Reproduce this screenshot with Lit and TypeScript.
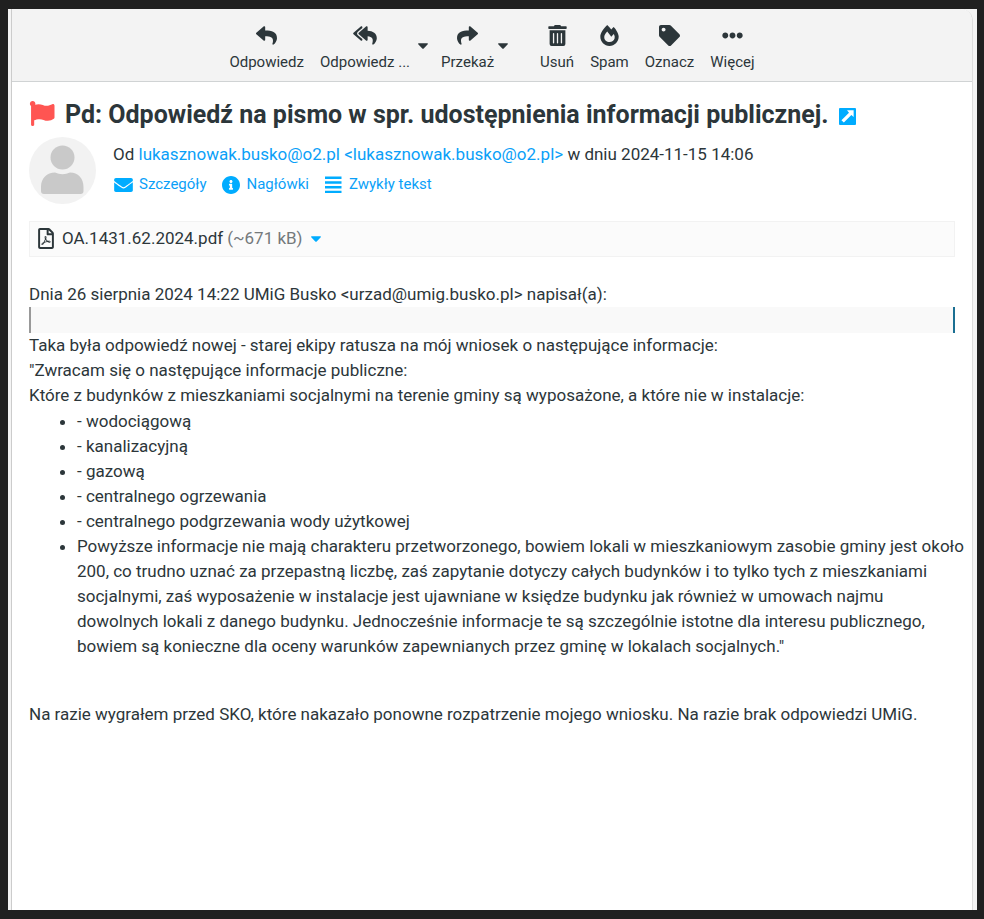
import { LitElement, html, css, svg } from "lit";
import { customElement, property } from "lit/decorators.js";

interface Glyph {
  box: string;
  d: string;
}

const REPLY =
  "M8.309 189.836L184.313 37.851C199.719 24.546 224 35.347 224 56.015v80.053c160.629 1.839 288 34.032 288 186.258 0 61.441-39.581 122.309-83.333 154.132-13.653 9.931-33.111-2.533-28.077-18.631 45.344-145.012-21.507-183.51-176.59-185.742V360c0 20.7-24.3 31.453-39.687 18.164l-176.004-152c-11.071-9.562-11.086-26.753 0-36.328z";

const glyphs: Record<string, Glyph> = {
  reply: { box: "0 0 512 512", d: REPLY },
  forward: { box: "0 0 512 512", d: REPLY },
  replyAll: {
    box: "0 0 576 512",
    d: "M136.309 189.836L312.313 37.851C327.72 24.546 352 35.348 352 56.015v82.763c129.182 10.231 224 52.212 224 183.548 0 61.441-39.582 122.309-83.333 154.132-13.653 9.931-33.111-2.533-28.077-18.631 38.512-123.162-3.922-169.482-112.59-182.015v84.175c0 20.701-24.3 31.453-39.687 18.164L136.309 226.164c-11.071-9.561-11.086-26.753 0-36.328zM8.309 226.164L184.313 378.15C199.7 391.439 224 380.687 224 359.986v-15.818l-108.606-93.785c-26.7-23-26.7-61.7 0-84.765L224 71.8V56.015c0-20.668-24.28-31.469-39.687-18.164L8.309 189.836c-11.086 9.575-11.071 26.767 0 36.328z",
  },
  trash: {
    box: "0 0 448 512",
    d: "M32 464a48 48 0 0 0 48 48h288a48 48 0 0 0 48-48V128H32zm272-256a16 16 0 0 1 32 0v224a16 16 0 0 1-32 0zm-96 0a16 16 0 0 1 32 0v224a16 16 0 0 1-32 0zm-96 0a16 16 0 0 1 32 0v224a16 16 0 0 1-32 0zM432 32H312l-9.4-18.7A24 24 0 0 0 281.1 0H166.8a23.72 23.72 0 0 0-21.4 13.3L136 32H16A16 16 0 0 0 0 48v32a16 16 0 0 0 16 16h416a16 16 0 0 0 16-16V48a16 16 0 0 0-16-16z",
  },
  spam: {
    box: "0 0 448 512",
    d: "M323.56 51.2c-20.8 19.3-39.58 39.59-56.22 59.97C240.08 73.62 206.28 35.53 168 0 69.74 91.17 0 209.96 0 281.6 0 408.85 100.29 512 224 512s224-103.15 224-230.4c0-53.27-51.98-163.14-124.44-230.4zm-19.47 340.65C282.43 407.01 255.72 416 226.86 416 154.71 416 96 368.26 96 290.75c0-38.61 24.31-72.63 72.79-130.75 6.93 7.98 98.83 125.34 98.83 125.34l58.63-66.88c4.14 6.85 7.91 13.55 11.27 19.97 27.35 52.19 15.81 118.97-33.43 153.42z",
  },
  tag: {
    box: "0 0 512 512",
    d: "M0 252.118V48C0 21.49 21.49 0 48 0h204.118a48 48 0 0 1 33.941 14.059l211.882 211.882c18.745 18.745 18.745 49.137 0 67.882L293.823 497.941c-18.745 18.745-49.137 18.745-67.882 0L14.059 286.059A48 48 0 0 1 0 252.118zM112 64c-26.51 0-48 21.49-48 48s21.49 48 48 48 48-21.49 48-48-21.49-48-48-48z",
  },
  more: {
    box: "0 0 512 512",
    d: "M328 256c0 39.8-32.2 72-72 72s-72-32.2-72-72 32.2-72 72-72 72 32.2 72 72zm104-72c-39.8 0-72 32.2-72 72s32.2 72 72 72 72-32.2 72-72-32.2-72-72-72zm-352 0c-39.8 0-72 32.2-72 72s32.2 72 72 72 72-32.2 72-72-32.2-72-72-72z",
  },
  caret: {
    box: "10 190 300 172",
    d: "M31.3 192h257.3c17.8 0 26.7 21.5 14.1 34.1L174.1 354.8c-7.8 7.8-20.5 7.8-28.3 0L17.2 226.1C4.6 213.5 13.5 192 31.3 192z",
  },
  flag: {
    box: "0 0 512 512",
    d: "M349.565 98.783C295.978 98.783 251.721 64 184.348 64c-24.955 0-47.309 4.384-68.045 12.013a55.947 55.947 0 0 0 3.586-23.562C118.117 24.015 94.806 1.206 66.338.048 34.345-1.254 8 24.296 8 56c0 19.026 9.497 35.825 24 45.945V488c0 13.255 10.745 24 24 24h16c13.255 0 24-10.745 24-24v-94.4c28.311-12.064 63.582-22.122 114.435-22.122 53.588 0 97.844 34.783 165.217 34.783 48.169 0 86.667-16.294 122.505-40.858C506.84 359.452 512 349.571 512 339.045v-243.1c0-23.393-24.269-38.87-45.485-29.016-34.338 15.948-76.454 31.854-116.95 31.854z",
  },
  open: {
    box: "0 0 18 18",
    d: "M1 0h16a1 1 0 0 1 1 1v16a1 1 0 0 1-1 1H1a1 1 0 0 1-1-1V1a1 1 0 0 1 1-1zM8.500 2.500L10.600 4.900 2.600 12.900 5.100 15.400 13.100 7.400 15.500 9.500V2.500z",
  },
  envelope: {
    box: "0 64 512 384",
    d: "M502.3 190.8c3.9-3.1 9.7-.2 9.7 4.7V400c0 26.5-21.5 48-48 48H48c-26.5 0-48-21.5-48-48V195.6c0-5 5.7-7.8 9.7-4.7 22.4 17.4 52.1 39.5 154.1 113.6 21.1 15.4 56.7 47.8 92.2 47.6 35.7.3 72-32.8 92.3-47.6 102-74.1 131.6-96.3 154-113.7zM256 320c23.2.4 56.6-29.2 73.4-41.4 132.7-96.3 142.8-104.7 173.4-128.7 5.8-4.5 9.2-11.5 9.2-18.9v-19c0-26.5-21.5-48-48-48H48c-26.5 0-48 21.5-48 48v19c0 7.4 3.4 14.3 9.2 18.9 30.6 23.9 40.7 32.4 173.4 128.7 16.8 12.2 50.2 41.8 73.4 41.4z",
  },
  info: {
    box: "8 8 496 496",
    d: "M256 8C119.043 8 8 119.083 8 256c0 136.997 111.043 248 248 248s248-111.003 248-248C504 119.083 392.957 8 256 8zm0 110c23.196 0 42 18.804 42 42s-18.804 42-42 42-42-18.804-42-42 18.804-42 42-42zm56 254c0 6.627-5.373 12-12 12h-88c-6.627 0-12-5.373-12-12v-24c0-6.627 5.373-12 12-12h12v-64h-12c-6.627 0-12-5.373-12-12v-24c0-6.627 5.373-12 12-12h64c6.627 0 12 5.373 12 12v100h12c6.627 0 12 5.373 12 12v24z",
  },
  lines: {
    box: "0 0 18 18",
    d: "M1 .6h16.500v2.400H1zM1 5.300h16.500v2.400H1zM1 10h16.500v2.400H1zM1 14.700h16.500v2.400H1z",
  },
  pdf: {
    box: "0 0 384 512",
    d: "M369.9 97.9L286 14C277 5 264.8-.1 252.1-.1H48C21.5 0 0 21.5 0 48v416c0 26.5 21.5 48 48 48h288c26.5 0 48-21.5 48-48V131.9c0-12.7-5.1-25-14.1-34zM332.1 128H256V51.9l76.1 76.1zM48 464V48h160v104c0 13.3 10.7 24 24 24h104v288H48zm250.2-143.7c-12.2-12-47-8.7-64.4-6.5-17.2-10.5-28.7-25-36.8-46.3 3.9-16.1 10.1-40.6 5.4-56-4.2-26.2-37.8-23.6-42.6-5.9-4.4 16.1-.4 38.5 7 67.1-10 23.9-24.9 56-35.4 74.4-20 10.3-47 26.2-51 46.2-3.3 15.8 26 55.2 76.1-31.2 22.4-7.4 46.8-16.5 68.4-20.1 18.9 10.2 41 17 55.8 17 25.5 0 28-28.2 17.5-38.7zm-198.1 77.8c5.1-13.7 24.5-29.5 30.4-35-19 30.3-30.4 35.7-30.4 35zm81.6-190.6c7.4 0 6.7 32.1 1.8 40.8-4.4-13.9-4.3-40.8-1.8-40.8zm-24.4 136.6c9.7-16.9 18-37 24.7-54.7 8.3 15.1 18.9 27.2 30.1 35.5-20.8 4.3-38.9 13.1-54.8 19.2zm131.6-5s-5 6-37.3-7.8c35.1-2.6 40.9 5.4 37.3 7.8z",
  },
};

@customElement("mail-icon")
export class MailIcon extends LitElement {
  @property() name = "reply";

  static styles = css`
    :host {
      display: block;
      flex: none;
    }
    svg {
      display: block;
      width: 100%;
      height: 100%;
      fill: currentColor;
    }
  `;

  render() {
    const g = glyphs[this.name];
    const flip = this.name === "forward" ? "matrix(-1 0 0 1 512 0)" : "";
    return html`<svg viewBox=${g.box} aria-hidden="true">
      ${svg`<path fill-rule="evenodd" transform=${flip} d=${g.d}></path>`}
    </svg>`;
  }
}

@customElement("app-root")
export class AppRoot extends LitElement {
  static styles = css`
    :host {
      box-sizing: border-box;
      min-height: 100vh;
      padding: 9px 7px 9px 8px;
      background: #202020;
      color: #2c363a;
      font: 17px/25px Roboto, sans-serif;
      display: flex;
    }
    .window {
      flex: 1;
      min-width: 0;
      display: flex;
      padding: 0 4px 0 3px;
      background: #f4f4f4;
    }
    .panel {
      flex: 1;
      min-width: 0;
      background: #fff;
      border: 1px solid #ddd;
      border-width: 0 1px;
      border-left-color: #ccc;
      border-top-right-radius: 12px;
    }
    .toolbar {
      display: flex;
      justify-content: center;
      align-items: stretch;
      height: 72px;
      background: #f3f3f3;
      border-bottom: 1px solid #d0d3d4;
      border-top-right-radius: 12px;
    }
    button {
      border: 0;
      padding: 0;
      background: none;
      color: inherit;
      font: inherit;
    }
    .tool {
      display: flex;
      flex-direction: column;
      align-items: center;
      gap: 6px;
      padding: 16px 8px 0;
      font-size: 15px;
      line-height: 20px;
      white-space: nowrap;
    }
    .tight {
      padding-right: 4px;
    }
    .glyph {
      width: 21px;
      height: 21px;
    }
    .wide {
      width: 24px;
    }
    .drop {
      display: flex;
      align-items: center;
      padding: 2px 5px 0 0;
    }
    .last {
      padding-right: 24px;
    }
    .caret {
      width: 10px;
      height: 6px;
    }
    .message {
      padding: 16px 17px;
    }
    h1 {
      display: flex;
      align-items: center;
      gap: 10px;
      margin: 0;
      font-size: 25px;
      line-height: 34px;
      font-weight: 700;
    }
    .flag {
      width: 26px;
      height: 25px;
      margin-bottom: 3px;
      color: #ff5552;
    }
    a {
      color: #0b9ff8;
      text-decoration: none;
    }
    .open {
      width: 17px;
      height: 17px;
      margin-top: 3px;
      color: #00acff;
    }
    .sender {
      display: flex;
      gap: 17px;
      margin-top: 5px;
    }
    .avatar {
      flex: none;
      width: 67px;
      height: 67px;
    }
    .avatar svg {
      display: block;
    }
    .from {
      margin: 5px 0 6px;
    }
    .links {
      display: flex;
      gap: 15px;
      font-size: 15px;
      line-height: 22px;
    }
    .links a {
      display: flex;
      align-items: center;
      gap: 7px;
    }
    .links mail-icon {
      color: #00acff;
      width: 18px;
      height: 18px;
      margin-top: 2px;
    }
    .links .mail {
      width: 19px;
      height: 14px;
      margin-left: 1px;
      margin-right: -1px;
    }
    .attachment {
      display: flex;
      align-items: center;
      margin-top: 17px;
      padding: 0 8px;
      height: 34px;
      background: #fbfbfb;
      border: 1px solid #f2f2f2;
    }
    .attachment a {
      display: flex;
      align-items: center;
      color: inherit;
      line-height: 24px;
      padding-bottom: 2px;
    }
    .pdf {
      width: 16px;
      height: 21px;
      margin-right: 8px;
    }
    .size {
      margin: 0 8px 0 4px;
      color: #74797b;
    }
    .blue {
      color: #00acff;
    }
    .body {
      margin-top: 25px;
    }
    p {
      margin: 0;
    }
    blockquote {
      height: 26px;
      margin: 0;
      background: #f9f9f9;
      border-left: 2px solid #999;
      border-right: 2px solid #1a6f92;
    }
    ul {
      margin: 1px -12px 43px 0;
      padding-left: 48px;
    }
  `;

  private tool(icon: string, label: string, extra = "") {
    return html`<button class="tool ${extra}">
      <mail-icon class="glyph ${icon === "replyAll" ? "wide" : ""}" name=${icon}></mail-icon>
      <span>${label}</span>
    </button>`;
  }

  private drop(label: string, extra = "") {
    return html`<button class="drop ${extra}" aria-label=${label}>
      <mail-icon class="caret" name="caret"></mail-icon>
    </button>`;
  }

  render() {
    return html`
      <div class="window">
        <main class="panel">
          <nav class="toolbar">
            ${this.tool("reply", "Odpowiedz")} ${this.tool("replyAll", "Odpowiedz ...")}
            ${this.drop("Opcje odpowiedzi")} ${this.tool("forward", "Przekaż", "tight")}
            ${this.drop("Opcje przekazania", "last")} ${this.tool("trash", "Usuń")}
            ${this.tool("spam", "Spam")} ${this.tool("tag", "Oznacz")}
            ${this.tool("more", "Więcej")}
          </nav>
          <article class="message">
            <h1>
              <mail-icon class="flag" name="flag"></mail-icon>
              <span>Pd: Odpowiedź na pismo w spr. udostępnienia informacji publicznej.</span>
              <a href="#" aria-label="Otwórz w nowym oknie"><mail-icon class="open" name="open"></mail-icon></a>
            </h1>
            <div class="sender">
              <div class="avatar">
                <svg viewBox="0 0 67 67" aria-hidden="true">
                  <circle cx="33.500" cy="33.500" r="33.500" fill="#f2f2f2"></circle>
                  <circle cx="33.500" cy="20.500" r="12" fill="#c9c9c9"></circle>
                  <path
                    d="M12 54V50C12 41 18 35.500 26 35.500Q33.500 39 41 35.500C49 35.500 54.500 41 54.500 50V54Q54.500 57 51.500 57H15Q12 57 12 54Z"
                    fill="#c9c9c9"
                  ></path>
                </svg>
              </div>
              <div>
                <p class="from">
                  Od <a href="#">lukasznowak.busko@o2.pl &lt;lukasznowak.busko@o2.pl&gt;</a> w dniu
                  2024-11-15 14:06
                </p>
                <div class="links">
                  <a href="#"><mail-icon class="mail" name="envelope"></mail-icon>Szczegóły</a>
                  <a href="#"><mail-icon name="info"></mail-icon>Nagłówki</a>
                  <a href="#"><mail-icon name="lines"></mail-icon>Zwykły tekst</a>
                </div>
              </div>
            </div>
            <div class="attachment">
              <a href="#">
                <mail-icon class="pdf" name="pdf"></mail-icon>
                <span>OA.1431.62.2024.pdf</span>
                <span class="size">(~671 kB)</span>
              </a>
              <button class="blue" aria-label="Opcje załącznika">
                <mail-icon class="caret" name="caret"></mail-icon>
              </button>
            </div>
            <div class="body">
              <p>Dnia 26 sierpnia 2024 14:22 UMiG Busko &lt;urzad@umig.busko.pl&gt; napisał(a):</p>
              <blockquote></blockquote>
              <p>Taka była odpowiedź nowej - starej ekipy ratusza na mój wniosek o następujące informacje:</p>
              <p>"Zwracam się o następujące informacje publiczne:</p>
              <p>Które z budynków z mieszkaniami socjalnymi na terenie gminy są wyposażone, a które nie w instalacje:</p>
              <ul>
                <li>- wodociągową</li>
                <li>- kanalizacyjną</li>
                <li>- gazową</li>
                <li>- centralnego ogrzewania</li>
                <li>- centralnego podgrzewania wody użytkowej</li>
                <li>
                  Powyższe informacje nie mają charakteru przetworzonego, bowiem lokali w mieszkaniowym
                  zasobie gminy jest około 200, co trudno uznać za przepastną liczbę, zaś zapytanie dotyczy
                  całych budynków i to tylko tych z mieszkaniami socjalnymi, zaś wyposażenie w instalacje
                  jest ujawniane w księdze budynku jak również w umowach najmu dowolnych lokali z danego
                  budynku. Jednocześnie informacje te są szczególnie istotne dla interesu publicznego,
                  bowiem są konieczne dla oceny warunków zapewnianych przez gminę w lokalach socjalnych."
                </li>
              </ul>
              <p>Na razie wygrałem przed SKO, które nakazało ponowne rozpatrzenie mojego wniosku. Na razie brak odpowiedzi UMiG.</p>
            </div>
          </article>
        </main>
      </div>
    `;
  }
}
